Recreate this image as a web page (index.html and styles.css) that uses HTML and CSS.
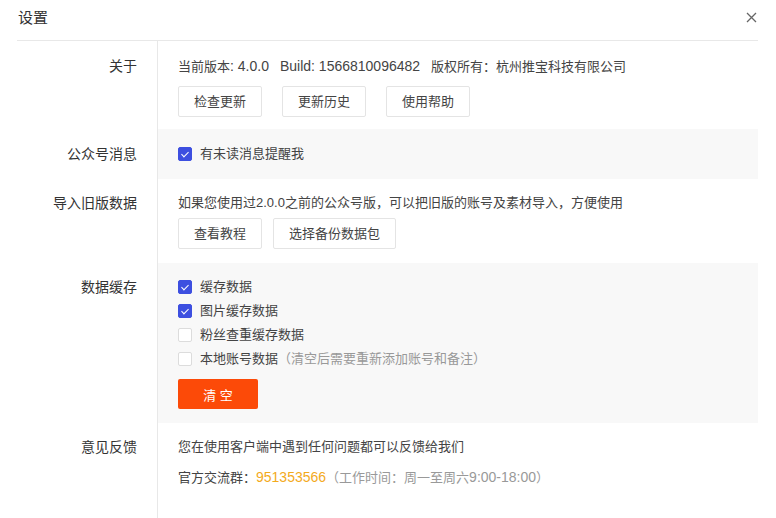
FILE: index.html
```html
<!DOCTYPE html>
<html lang="zh">
<head>
<meta charset="utf-8">
<title>设置</title>
<link rel="stylesheet" href="styles.css">
</head>
<body>
<div class="dialog">
  <div class="header">
    <span class="title">设置</span>
    <span class="close">
      <svg width="11" height="11" viewBox="0 0 11 11"><path d="M1 1L10 10M10 1L1 10" stroke="#666" stroke-width="1.3" fill="none"/></svg>
    </span>
  </div>
  <div class="rows">
    <div class="row r1">
      <div class="label">关于</div>
      <div class="content">
        <div class="line">当前版本<span class="lat">: 4.0.0<span class="sp"></span>Build: 1566810096482<span class="sp"></span></span>版权所有：杭州推宝科技有限公司</div>
        <div class="btns gap20">
          <button class="btn">检查更新</button>
          <button class="btn">更新历史</button>
          <button class="btn">使用帮助</button>
        </div>
      </div>
    </div>
    <div class="row r2">
      <div class="label">公众号消息</div>
      <div class="content gray">
        <div class="check"><span class="box on"></span>有未读消息提醒我</div>
      </div>
    </div>
    <div class="row r3">
      <div class="label">导入旧版数据</div>
      <div class="content">
        <div class="line">如果您使用过2.0.0之前的公众号版，可以把旧版的账号及素材导入，方便使用</div>
        <div class="btns gap12">
          <button class="btn">查看教程</button>
          <button class="btn">选择备份数据包</button>
        </div>
      </div>
    </div>
    <div class="row r4">
      <div class="label">数据缓存</div>
      <div class="content gray">
        <div class="check"><span class="box on"></span>缓存数据</div>
        <div class="check"><span class="box on"></span>图片缓存数据</div>
        <div class="check"><span class="box"></span>粉丝查重缓存数据</div>
        <div class="check"><span class="box"></span>本地账号数据<span class="muted">（清空后需要重新添加账号和备注）</span></div>
        <button class="btn-red">清 空</button>
      </div>
    </div>
    <div class="row r5">
      <div class="label">意见反馈</div>
      <div class="content">
        <div class="line">您在使用客户端中遇到任何问题都可以反馈给我们</div>
        <div class="line second">官方交流群：<span class="num lat">951353566</span><span class="muted">（工作时间：周一至周六<span class="lat">9:00-18:00</span>）</span></div>
      </div>
    </div>
  </div>
</div>
</body>
</html>
```
FILE: styles.css
```css
html, body {
  margin: 0;
  padding: 0;
  background: #fff;
}
body {
  font-family: "Liberation Sans", "Noto Sans CJK SC", sans-serif;
  font-size: 13px;
  color: #444;
  width: 776px;
  height: 518px;
  overflow: hidden;
}
.dialog {
  padding: 0 18px 0 17px;
}
.header {
  height: 40px;
  border-bottom: 1px solid #e8e8e8;
  display: flex;
  align-items: center;
  justify-content: space-between;
}
.title {
  font-size: 15px;
  color: #333;
  padding-left: 1px;
  padding-bottom: 7px;
}
.close {
  display: flex;
  padding-bottom: 6px;
  margin-right: 1px;
}
.rows {
  margin-left: -17px;
}
.row {
  display: grid;
  grid-template-columns: 157px 1fr;
}
.label {
  text-align: right;
  padding-right: 20px;
  color: #333;
  font-size: 14px;
  line-height: 20px;
}
.content {
  border-left: 1px solid #e8e8e8;
  padding-left: 20px;
  line-height: 20px;
  color: #444;
}
.lat {
  font-size: 14px;
}
.sp {
  display: inline-block;
  width: 11px;
}
.gray {
  background: #f8f8f8;
}
.r1 .label, .r1 .content { padding-top: 15px; }
.r1 .content { height: 73px; }
.r2 .label, .r2 .content { padding-top: 15px; }
.r2 .content { height: 35px; }
.r3 .label, .r3 .content { padding-top: 14px; }
.r3 .content { height: 70px; }
.r4 .label { padding-top: 14px; }
.r4 .content { padding-top: 12px; height: 148px; }
.r5 .label, .r5 .content { padding-top: 14px; }
.r5 .content { height: 90px; }
.btns {
  display: flex;
  margin-top: 9px;
}
.gap20 { gap: 20px; }
.gap12 { gap: 11px; }
.r3 .btns { margin-top: 5px; }
.btn {
  font-family: inherit;
  font-size: 13px;
  color: #444;
  background: #fff;
  border: 1px solid #e4e4e4;
  border-radius: 2px;
  height: 31px;
  padding: 0 15px;
  line-height: 29px;
}
.check {
  display: flex;
  align-items: center;
  height: 24px;
  line-height: 24px;
  color: #444;
}
.r2 .check { height: 20px; }
.box {
  width: 14px;
  height: 14px;
  box-sizing: border-box;
  border: 1px solid #dcdcdc;
  border-radius: 2px;
  background: #fff;
  margin-right: 8px;
  position: relative;
}
.box.on {
  background: #3d4fe0;
  border-color: #3d4fe0;
}
.box.on::after {
  content: "";
  position: absolute;
  left: 4px;
  top: 1.5px;
  width: 3px;
  height: 6px;
  border-right: 1.6px solid #fff;
  border-bottom: 1.6px solid #fff;
  transform: rotate(45deg);
}
.muted {
  color: #999;
}
.num {
  color: #f3aa1c;
}
.btn-red {
  margin-top: 8px;
  width: 80px;
  height: 30px;
  border: none;
  border-radius: 2px;
  background: #fc4a08;
  color: #fff;
  font-family: inherit;
  font-size: 13px;
  padding: 0;
}
.second {
  margin-top: 10px;
}
```
